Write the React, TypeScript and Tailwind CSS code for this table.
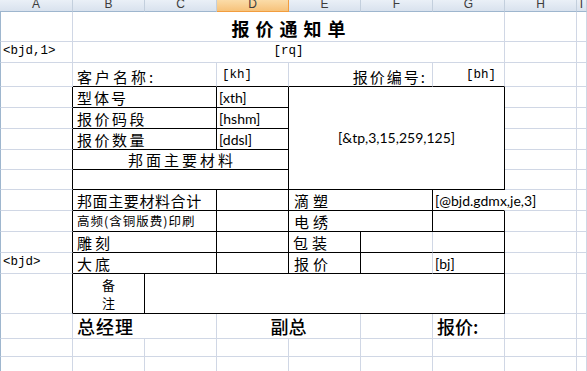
import type { ReactNode } from "react";

type Edge = "g" | "k" | "n";

const cjk = "font-['Noto_Sans_CJK_SC',sans-serif]";
const mono = "font-['Liberation_Mono','Noto_Sans_CJK_SC',monospace] text-[12.5px]";
const latin = "font-['Lato','Noto_Sans_CJK_SC',sans-serif] text-[14px]";

function Cell({
  className = "",
  r = "g",
  b = "g",
  mid = false,
  children,
}: {
  className?: string;
  r?: Edge;
  b?: Edge;
  mid?: boolean;
  children?: ReactNode;
}) {
  const rc = r === "k" ? "border-r-black" : r === "n" ? "border-r-transparent" : "border-r-[#d0d7e5]";
  const bc = b === "k" ? "border-b-black" : b === "n" ? "border-b-transparent" : "border-b-[#d0d7e5]";
  const v = mid ? "items-center" : "items-end";
  return (
    <div className={`flex ${v} whitespace-nowrap border-r border-b ${rc} ${bc} ${className}`}>
      {children}
    </div>
  );
}

function ColHead({ label, active = false }: { label: string; active?: boolean }) {
  return (
    <div
      className={`flex justify-center overflow-hidden border-r border-b text-[12px] leading-[14px] text-[#3c3c3c] font-['Liberation_Sans',sans-serif] ${
        active
          ? "border-[#f29d3e] bg-linear-to-b from-[#fbdca8] to-[#f6c27a]"
          : "border-r-[#c3cfdd] border-b-[#9eb6ce] bg-linear-to-b from-[#eaf0f7] to-[#d9e2ee]"
      }`}
    >
      <span className="relative -top-[3px]">{label}</span>
    </div>
  );
}

// column A gets the row-header edge on its left
const a = "border-l border-l-[#9eb6ce]";

export default function App() {
  return (
    <div className={`h-[371px] w-[587px] overflow-hidden bg-white text-black ${cjk} text-[15px] leading-[18px]`}>
      <div className="grid grid-cols-[73px_72px_72px_72px_72px_72px_72px_72px_1fr] grid-rows-[12px_30px_21px_24px_21px_21px_21px_20px_20px_21px_21px_21px_21px_40px_25px_18px_18px]">
        {/* column headers */}
        <ColHead label="A" />
        <ColHead label="B" />
        <ColHead label="C" />
        <ColHead label="D" active />
        <ColHead label="E" />
        <ColHead label="F" />
        <ColHead label="G" />
        <ColHead label="H" />
        <ColHead label="I" />

        {/* 1 */}
        <Cell className={a} />
        <Cell className="col-span-6 justify-center pb-[4px] pl-[6px] text-[18px] font-bold tracking-[6px]">
          报价通知单
        </Cell>
        <Cell />
        <Cell />

        {/* 2 */}
        <Cell className={`${a} pl-[2px] pb-[2px] ${mono}`}>&lt;bjd,1&gt;</Cell>
        <Cell className={`col-span-6 justify-center pb-[2px] ${mono}`}>[rq]</Cell>
        <Cell />
        <Cell />

        {/* 3 */}
        <Cell className={a} />
        <Cell b="k" className="col-span-2 pl-[4px] tracking-[3px]">
          客户名称:
        </Cell>
        <Cell b="k" className={`pl-[5px] pb-[2px] ${mono}`}>
          [kh]
        </Cell>
        <Cell b="k" className="col-span-2 justify-end pr-[5px] tracking-[2px]">
          报价编号:
        </Cell>
        <Cell b="k" className={`justify-end pr-[8px] pb-[2px] ${mono}`}>
          [bh]
        </Cell>
        <Cell />
        <Cell />

        {/* 4 */}
        <Cell r="k" className={a} />
        <Cell r="k" b="k" className="col-span-2 pl-[4px] tracking-[2px]">
          型体号
        </Cell>
        <Cell r="k" b="k" className={`pl-[2px] ${latin}`}>
          [xth]
        </Cell>
        <Cell r="k" b="k" mid className={`col-span-3 row-span-5 justify-center ${latin}`}>
          [&amp;tp,3,15,259,125]
        </Cell>
        <Cell />
        <Cell />

        {/* 5 */}
        <Cell r="k" className={a} />
        <Cell r="k" b="k" className="col-span-2 pl-[4px] tracking-[2.5px]">
          报价码段
        </Cell>
        <Cell r="k" b="k" className={`pl-[2px] ${latin}`}>
          [hshm]
        </Cell>
        <Cell />
        <Cell />

        {/* 6 */}
        <Cell r="k" className={a} />
        <Cell r="k" b="k" className="col-span-2 pl-[4px] tracking-[2.5px]">
          报价数量
        </Cell>
        <Cell r="k" b="k" className={`pl-[2px] ${latin}`}>
          [ddsl]
        </Cell>
        <Cell />
        <Cell />

        {/* 7 */}
        <Cell r="k" className={a} />
        <Cell r="k" b="k" className="col-span-3 justify-center pl-[3px] tracking-[3px]">
          邦面主要材料
        </Cell>
        <Cell />
        <Cell />

        {/* 8 */}
        <Cell r="k" className={a} />
        <Cell r="k" b="k" className="col-span-3" />
        <Cell />
        <Cell />

        {/* 9 */}
        <Cell r="k" className={a} />
        <Cell r="k" b="k" className="col-span-2 pl-[4px] tracking-[0.6px]">
          邦面主要材料合计
        </Cell>
        <Cell r="k" b="k" />
        <Cell r="k" b="k" className="col-span-2 pl-[5px] tracking-[4px]">
          滴塑
        </Cell>
        <Cell r="n" b="k" className={`pl-[2px] ${latin}`}>
          [@bjd.gdmx,je,3]
        </Cell>
        <Cell />
        <Cell />

        {/* 10 */}
        <Cell r="k" className={a} />
        <Cell r="k" b="k" className="col-span-2 pl-[4px] pb-[1px] text-[12.5px] tracking-[1px]">
          高频(含铜版费)印刷
        </Cell>
        <Cell r="k" b="k" />
        <Cell r="k" b="k" className="col-span-2 pl-[5px] tracking-[4px]">
          电绣
        </Cell>
        <Cell r="k" b="k" />
        <Cell />
        <Cell />

        {/* 11 */}
        <Cell r="k" className={a} />
        <Cell r="k" b="k" className="col-span-2 pl-[4px] tracking-[3px]">
          雕刻
        </Cell>
        <Cell r="k" b="k" />
        <Cell r="k" b="k" className="pl-[4px] tracking-[4px]">
          包装
        </Cell>
        <Cell b="k" />
        <Cell r="k" b="k" />
        <Cell />
        <Cell />

        {/* 12 */}
        <Cell r="k" className={`${a} pl-[2px] pb-[2px] ${mono}`}>
          &lt;bjd&gt;
        </Cell>
        <Cell r="k" b="k" className="col-span-2 pl-[4px] tracking-[3px]">
          大底
        </Cell>
        <Cell r="k" b="k" />
        <Cell r="k" b="k" className="pl-[5px] tracking-[4px]">
          报价
        </Cell>
        <Cell b="k" />
        <Cell r="k" b="k" className={`pl-[2px] ${latin}`}>
          [bj]
        </Cell>
        <Cell />
        <Cell />

        {/* 13 */}
        <Cell r="k" className={a} />
        <Cell r="k" b="k" mid className="justify-center">
          <div className="flex flex-col items-center text-[13px] leading-[18px]">
            <span>备</span>
            <span>注</span>
          </div>
        </Cell>
        <Cell r="k" b="k" className="col-span-5" />
        <Cell />
        <Cell />

        {/* 14 */}
        <Cell className={a} />
        <Cell className="col-span-2 pl-[4px] pb-[1px] text-[18px] leading-[22px] font-medium tracking-[1px]">
          总经理
        </Cell>
        <Cell className="col-span-2 justify-center pb-[1px] text-[18px] leading-[22px] font-medium">
          副总
        </Cell>
        <Cell />
        <Cell className="pl-[4px] pb-[1px] text-[18px] leading-[22px] font-medium">
          报价:
        </Cell>
        <Cell />
        <Cell />

        {/* 15 */}
        <Cell className={a} />
        <Cell />
        <Cell />
        <Cell />
        <Cell />
        <Cell />
        <Cell />
        <Cell />
        <Cell />

        {/* 16 */}
        <Cell className={a} />
        <Cell />
        <Cell />
        <Cell />
        <Cell />
        <Cell />
        <Cell />
        <Cell />
        <Cell />
      </div>
    </div>
  );
}
